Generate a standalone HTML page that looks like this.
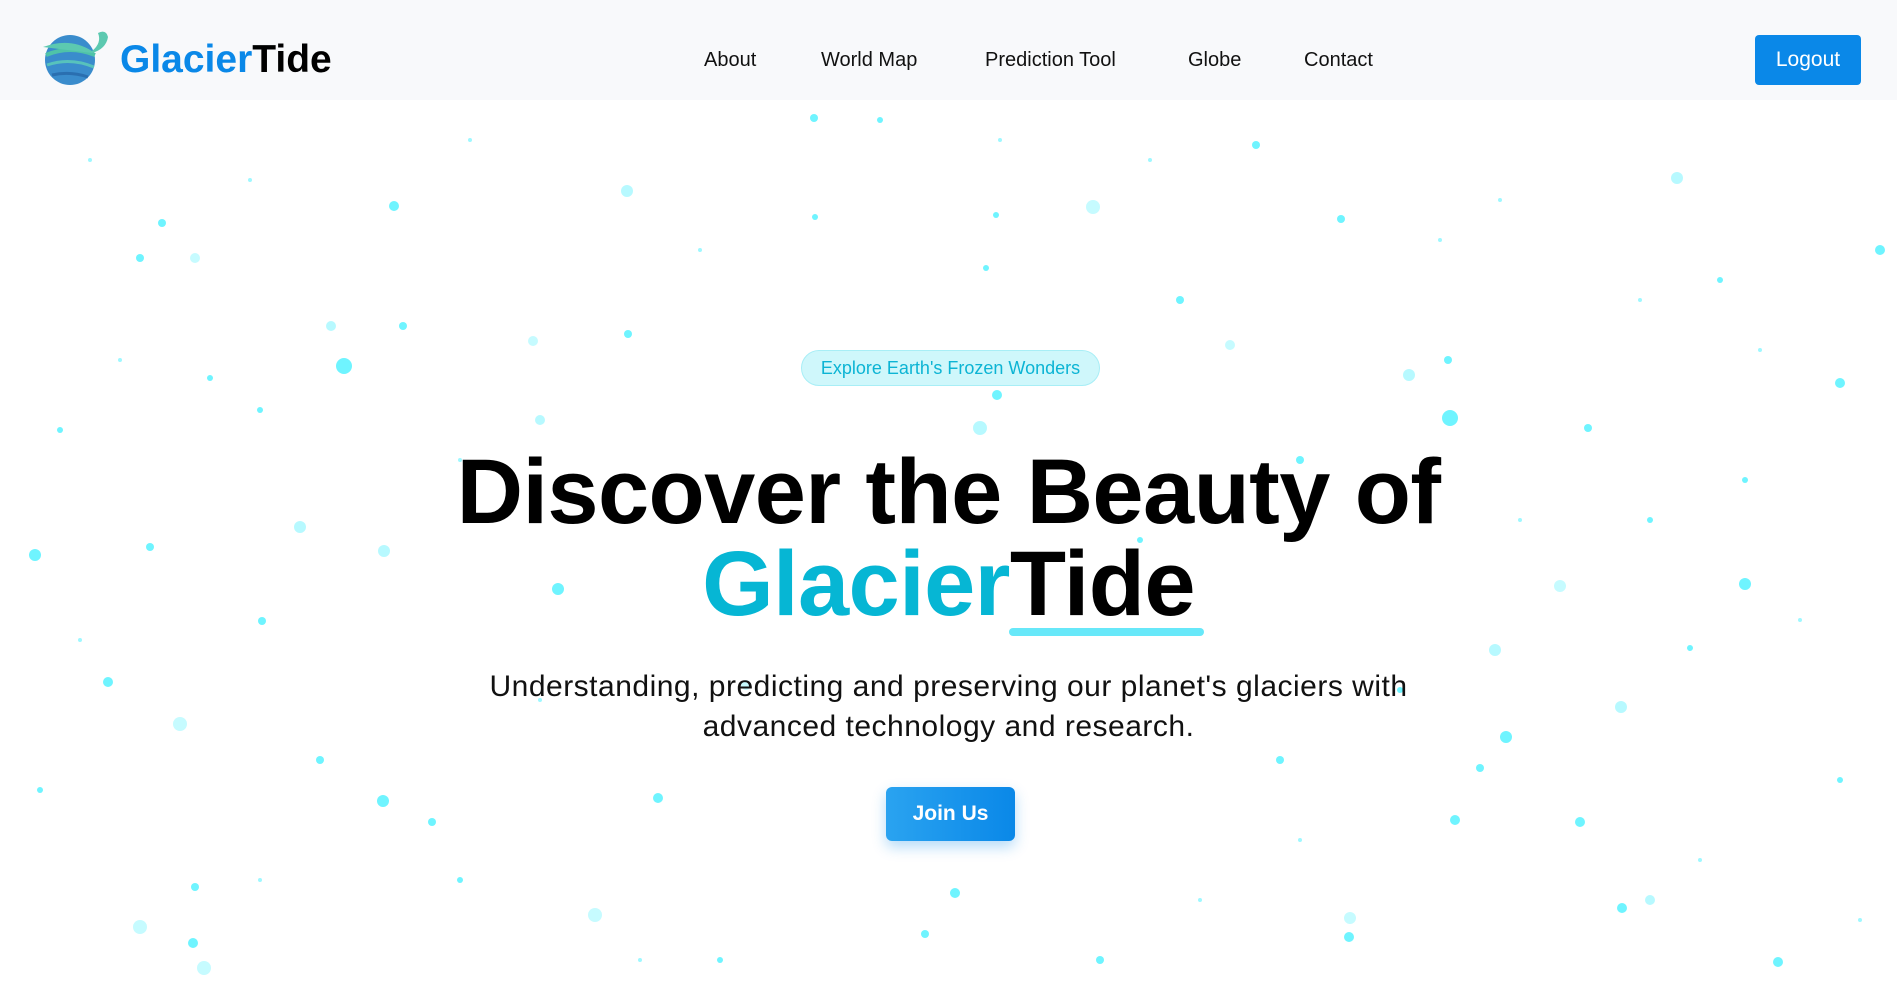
<!DOCTYPE html>
<html><head><meta charset="utf-8"><style>
*{margin:0;padding:0;box-sizing:border-box}
body{width:1897px;height:983px;overflow:hidden;background:#fff;font-family:"Liberation Sans",sans-serif;position:relative}
.hdr{position:absolute;left:0;top:0;width:1897px;height:100px;background:#f8f9fb;z-index:2}
.logo{position:absolute;left:120px;top:38px;font-size:39px;font-weight:bold;letter-spacing:0px}
.nav a{position:absolute;top:49px;font-size:20px;color:#111;text-decoration:none}
.logout{position:absolute;left:1755px;top:35px;width:106px;height:50px;background:#0a88e8;border-radius:4px;color:#fff;font-size:21px;text-align:center;line-height:50px}
svg.dots{position:absolute;left:0;top:0;z-index:0}
.c{position:absolute;left:0;width:1897px;text-align:center;z-index:1}
.badge{position:absolute;left:801px;top:350px;width:299px;height:36px;border-radius:18px;background:#cff7fb;border:1px solid #a8eef6;color:#0cb4d4;font-size:18px;text-align:center;line-height:34px;z-index:1}
h1{font-size:92px;font-weight:bold;letter-spacing:-0.6px;line-height:92px;color:#000}
.ul{position:absolute;left:1009px;top:628px;width:195px;height:8px;border-radius:4px;background:#67e8f9;z-index:1}
p{font-size:30px;letter-spacing:0.5px;line-height:40px;color:#111}
.join{position:absolute;left:886px;top:787px;width:129px;height:54px;border-radius:6px;background:linear-gradient(90deg,#2aa3f0,#0a88e8);color:#fff;font-size:21px;font-weight:bold;text-align:center;line-height:54px;box-shadow:0 6px 14px rgba(10,136,232,.3);z-index:1}
</style></head><body>
<svg class="dots" width="1897" height="983" fill="#5ff3ff">
<g opacity=".9">
<circle cx="814" cy="118" r="4"/><circle cx="880" cy="120" r="3"/><circle cx="1256" cy="145" r="4"/><circle cx="627" cy="191" r="6" opacity=".5"/><circle cx="394" cy="206" r="5"/><circle cx="1093" cy="207" r="7" opacity=".4"/><circle cx="815" cy="217" r="3"/><circle cx="996" cy="215" r="3"/><circle cx="162" cy="223" r="4"/><circle cx="1341" cy="219" r="4"/><circle cx="1677" cy="178" r="6" opacity=".5"/><circle cx="140" cy="258" r="4"/><circle cx="195" cy="258" r="5" opacity=".4"/><circle cx="986" cy="268" r="3"/><circle cx="1880" cy="250" r="5"/><circle cx="331" cy="326" r="5" opacity=".5"/><circle cx="403" cy="326" r="4"/><circle cx="628" cy="334" r="4"/><circle cx="533" cy="341" r="5" opacity=".4"/><circle cx="344" cy="366" r="8"/><circle cx="210" cy="378" r="3"/><circle cx="1409" cy="375" r="6" opacity=".5"/><circle cx="1448" cy="360" r="4"/><circle cx="1840" cy="383" r="5"/><circle cx="1450" cy="418" r="8"/><circle cx="980" cy="428" r="7" opacity=".5"/><circle cx="997" cy="395" r="5"/><circle cx="1588" cy="428" r="4"/><circle cx="35" cy="555" r="6"/><circle cx="150" cy="547" r="4"/><circle cx="384" cy="551" r="6" opacity=".5"/><circle cx="558" cy="589" r="6"/><circle cx="1745" cy="584" r="6"/><circle cx="1560" cy="586" r="6" opacity=".4"/><circle cx="262" cy="621" r="4"/><circle cx="1495" cy="650" r="6" opacity=".5"/><circle cx="108" cy="682" r="5"/><circle cx="180" cy="724" r="7" opacity=".4"/><circle cx="1506" cy="737" r="6"/><circle cx="1621" cy="707" r="6" opacity=".5"/><circle cx="1480" cy="768" r="4"/><circle cx="383" cy="801" r="6"/><circle cx="658" cy="798" r="5"/><circle cx="432" cy="822" r="4"/><circle cx="1455" cy="820" r="5"/><circle cx="1580" cy="822" r="5"/><circle cx="1622" cy="908" r="5"/><circle cx="1650" cy="900" r="5" opacity=".5"/><circle cx="955" cy="893" r="5"/><circle cx="195" cy="887" r="4"/><circle cx="140" cy="927" r="7" opacity=".4"/><circle cx="193" cy="943" r="5"/><circle cx="1349" cy="937" r="5"/><circle cx="1350" cy="918" r="6" opacity=".4"/><circle cx="204" cy="968" r="7" opacity=".4"/><circle cx="1778" cy="962" r="5"/><circle cx="925" cy="934" r="4"/><circle cx="595" cy="915" r="7" opacity=".4"/><circle cx="1745" cy="480" r="3"/><circle cx="1650" cy="520" r="3"/><circle cx="300" cy="527" r="6" opacity=".5"/><circle cx="1140" cy="540" r="3"/><circle cx="746" cy="685" r="5" opacity=".4"/><circle cx="1400" cy="690" r="3"/><circle cx="1690" cy="648" r="3"/><circle cx="60" cy="430" r="3"/><circle cx="1180" cy="300" r="4"/><circle cx="1230" cy="345" r="5" opacity=".4"/><circle cx="540" cy="420" r="5" opacity=".5"/><circle cx="1300" cy="460" r="4"/><circle cx="1720" cy="280" r="3"/><circle cx="260" cy="410" r="3"/><circle cx="460" cy="880" r="3"/><circle cx="1100" cy="960" r="4"/><circle cx="720" cy="960" r="3"/><circle cx="320" cy="760" r="4"/><circle cx="1280" cy="760" r="4"/><circle cx="1840" cy="780" r="3"/><circle cx="40" cy="790" r="3"/>
</g>
<g opacity=".6"><circle cx="90" cy="160" r="2"/><circle cx="250" cy="180" r="2"/><circle cx="470" cy="140" r="2"/><circle cx="700" cy="250" r="2"/><circle cx="1150" cy="160" r="2"/><circle cx="1500" cy="200" r="2"/><circle cx="1640" cy="300" r="2"/><circle cx="1760" cy="350" r="2"/><circle cx="120" cy="360" r="2"/><circle cx="460" cy="460" r="2"/><circle cx="1520" cy="520" r="2"/><circle cx="1800" cy="620" r="2"/><circle cx="80" cy="640" r="2"/><circle cx="540" cy="700" r="2"/><circle cx="1300" cy="840" r="2"/><circle cx="1700" cy="860" r="2"/><circle cx="260" cy="880" r="2"/><circle cx="640" cy="960" r="2"/><circle cx="1200" cy="900" r="2"/><circle cx="1860" cy="920" r="2"/><circle cx="1000" cy="140" r="2"/><circle cx="1440" cy="240" r="2"/></g>
</svg>
<div class="hdr">
<svg style="position:absolute;left:40px;top:25px" width="70" height="62" viewBox="0 0 70 62">
<circle cx="30" cy="35" r="25" fill="#3a8ccc"/>
<path d="M6 30 Q30 20 55 30" stroke="#4fc3a8" stroke-width="4" fill="none"/>
<path d="M7 40 Q30 32 54 42" stroke="#5fd0b8" stroke-width="3" fill="none" opacity=".8"/>
<path d="M12 50 Q30 46 48 52" stroke="#2a6fb0" stroke-width="3" fill="none"/>
<path d="M3 22 Q30 12 52 26 Q62 18 58 8 Q66 4 68 12 Q66 24 52 28" fill="#5cc9b0"/>
</svg>
<div class="logo"><span style="color:#0a88e8">Glacier</span><span style="color:#000">Tide</span></div>
<div class="nav"><a style="left:704px">About</a><a style="left:821px">World Map</a><a style="left:985px">Prediction Tool</a><a style="left:1188px">Globe</a><a style="left:1304px">Contact</a></div>
<div class="logout">Logout</div>
</div>
<div class="badge">Explore Earth's Frozen Wonders</div>
<h1 class="c" style="top:446px">Discover the Beauty of<br><span style="color:#06b6d4">Glacier</span>Tide</h1>
<div class="ul"></div>
<p class="c" style="top:667px">Understanding, predicting and preserving our planet's glaciers with<br>advanced technology and research.</p>
<div class="join">Join Us</div>
</body></html>
